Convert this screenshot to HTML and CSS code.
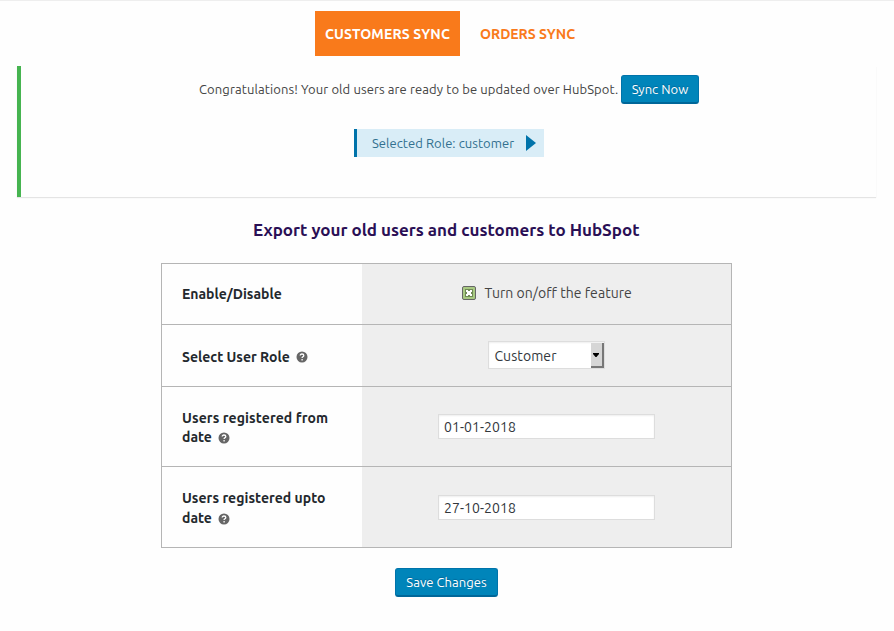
FILE: index.html
```html
<!DOCTYPE html>
<html lang="en">
<head>
<meta charset="utf-8">
<title>Customers Sync</title>
<link rel="stylesheet" href="styles.css">
</head>
<body>
<nav class="tabs">
  <a class="tab tab-active"><span class="tab-customers">CUSTOMERS SYNC</span></a>
  <a class="tab"><span class="tab-orders">ORDERS SYNC</span></a>
</nav>
<section class="notice">
  <div class="notice-line">
    <span class="congrats">Congratulations! Your old users are ready to be updated over HubSpot.</span>
    <button class="button sync" type="button">Sync Now</button>
  </div>
  <div class="role"><span class="role-text">Selected Role: customer</span><svg class="play" width="10" height="16" viewBox="0 0 10 16"><path d="M0 0L10 8L0 16Z" fill="#0073aa"/></svg></div>
</section>
<h2 class="title">Export your old users and customers to HubSpot</h2>
<form class="settings">
  <div class="row row-enable">
    <div class="label"><span class="l-enable">Enable/Disable</span></div>
    <div class="field">
      <svg class="check" width="14" height="14" viewBox="0 0 14 14"><rect x=".5" y=".5" width="13" height="13" rx="1.5" fill="#a9ca83" stroke="#666"/><rect x="3" y="3" width="8" height="8" fill="#6f8a55"/><path d="M4 4H6V5H8V4H10V6H9V8H10V10H8V9H6V10H4V8H5V6H4Z" fill="#fff"/></svg>
      <span class="feature">Turn on/off the feature</span>
    </div>
  </div>
  <div class="row row-role">
    <div class="label"><span class="l-role">Select User Role</span><svg class="help" viewBox="0 0 12 12"><circle cx="6" cy="6" r="5.5" fill="#666"/><path d="M4.2 4.6Q4.2 3 6 3Q7.8 3 7.8 4.4Q7.8 5.3 6.7 5.9Q6.1 6.2 6.1 7M6.1 8.1V9.4" fill="none" stroke="#fff" stroke-width="1.3"/></svg></div>
    <div class="field">
      <div class="select"><span class="select-text">Customer</span><span class="select-arrow"><svg width="6" height="4" viewBox="0 0 6 4"><path d="M0 0H6V1L3.5 4H2.5L0 1Z" fill="#000"/></svg></span></div>
    </div>
  </div>
  <div class="row row-from">
    <div class="label"><div><span class="l-from">Users registered from</span><br><span class="l-date">date</span><svg class="help" viewBox="0 0 12 12"><circle cx="6" cy="6" r="5.5" fill="#666"/><path d="M4.2 4.6Q4.2 3 6 3Q7.8 3 7.8 4.4Q7.8 5.3 6.7 5.9Q6.1 6.2 6.1 7M6.1 8.1V9.4" fill="none" stroke="#fff" stroke-width="1.3"/></svg></div></div>
    <div class="field"><div class="input"><span>01-01-2018</span></div></div>
  </div>
  <div class="row row-upto">
    <div class="label"><div><span class="l-upto">Users registered upto</span><br><span class="l-date">date</span><svg class="help" viewBox="0 0 12 12"><circle cx="6" cy="6" r="5.5" fill="#666"/><path d="M4.2 4.6Q4.2 3 6 3Q7.8 3 7.8 4.4Q7.8 5.3 6.7 5.9Q6.1 6.2 6.1 7M6.1 8.1V9.4" fill="none" stroke="#fff" stroke-width="1.3"/></svg></div></div>
    <div class="field"><div class="input"><span>27-10-2018</span></div></div>
  </div>
</form>
<button class="button save" type="button">Save Changes</button>
</body>
</html>
```
FILE: styles.css
```css
* { box-sizing: border-box; }
body {
  margin: 0;
  height: 631px;
  background: #fefefe;
  border-top: 1px solid #eee;
  font: 13px/19px Ubuntu, "Noto Sans", sans-serif;
  color: #444;
  white-space: nowrap;
}
.tabs { display: flex; margin: 10px 0 0 315px; gap: 10px; }
.tab {
  display: flex; align-items: center; height: 45px; padding: 2px 10px 0;
  color: #f97a1b; font-size: 14px; font-weight: 700;
}
.tab-active { width: 145px; background: #f97a1b; color: #fff; }
.tab-customers { letter-spacing: .14px; }
.tab-orders { letter-spacing: -.03px; }
.notice {
  margin: 10px 18px 0 17px; height: 131px;
  border-left: 4px solid #46b450;
  box-shadow: 0 1px 1px 0 rgba(0,0,0,.1);
  padding-top: 9px;
}
.notice-line { display: flex; align-items: center; padding-left: 178px; }
.congrats { width: 422px; letter-spacing: .105px; }
.button {
  height: 29px; padding: 0 0 2px; text-align: center;
  font: 13px/26px Ubuntu, "Noto Sans", sans-serif;
  color: #fff; background: #0085ba; letter-spacing: .05px;
  border: 1px solid #0073aa; border-bottom: 2px solid #006799; border-radius: 3px;
  text-shadow: 0 -1px 1px #006799;
}
.sync { width: 78px; }
.role {
  display: flex; align-items: center;
  margin: 25px 0 0 333px; width: 190px; height: 28px; padding-left: 15px;
  background: #d9edf7; border-left: 3px solid #0073aa; color: #31708f;
}
.role-text { width: 154px; letter-spacing: .05px; }
.title {
  margin: 20px 0 0; padding-left: 253px;
  font-size: 17px; line-height: 26px; font-weight: 700; color: #2a0f55;
}
.settings {
  margin: 20px 0 0 161px; width: 571px; height: 285px;
  border: 1px solid #b5b5b5;
  display: grid; grid-template-rows: 60px 62px 80px 81px;
  font-size: 14px;
}
.row { display: grid; grid-template-columns: 200px 1fr; }
.row + .row { border-top: 1px solid #b5b5b5; }
.label {
  display: flex; align-items: center; padding-left: 20px;
  color: #23282d; font-weight: 700; line-height: 20px;
}
.l-from { letter-spacing: .11px; }
.l-upto { letter-spacing: .04px; }
.row-from .label { line-height: 19px; padding-top: 2px; }
.row-upto .label { padding-top: 1px; }
.row-role .label { padding-top: 3px; }
.help { width: 12px; height: 12px; margin-left: 6px; vertical-align: -2px; }
.field { display: flex; align-items: center; justify-content: center; background: #eee; }
.row-enable .field { padding-bottom: 2px; }
.row-role .field { padding: 0 1px 1px 0; }
.check { margin-right: 9px; }
.feature { width: 147px; letter-spacing: .04px; }
.select {
  display: flex; width: 117px; height: 28px; background: #fff;
  border: 1px solid #ddd; box-shadow: inset 0 1px 2px rgba(0,0,0,.07);
  padding: 1px 0 0 6px; align-items: center; color: #32373c;
}
.select-text { flex: 1; letter-spacing: .1px; padding-top: 2px; }
.select-arrow {
  width: 13px; height: 25px; background: #d6d6d6;
  border-right: 2px solid #777; border-bottom: 2px solid #777;
  display: flex; align-items: center; justify-content: center;
}
.input {
  width: 217px; height: 25px; padding: 2px 5px; line-height: 20px;
  border: 1px solid #ddd; background: #fff; color: #32373c;
  box-shadow: inset 0 1px 2px rgba(0,0,0,.07); letter-spacing: .06px;
}
.row-from .input { margin-bottom: 1px; }
.save { display: block; margin: 20px 0 0 395px; width: 103px; }
```
